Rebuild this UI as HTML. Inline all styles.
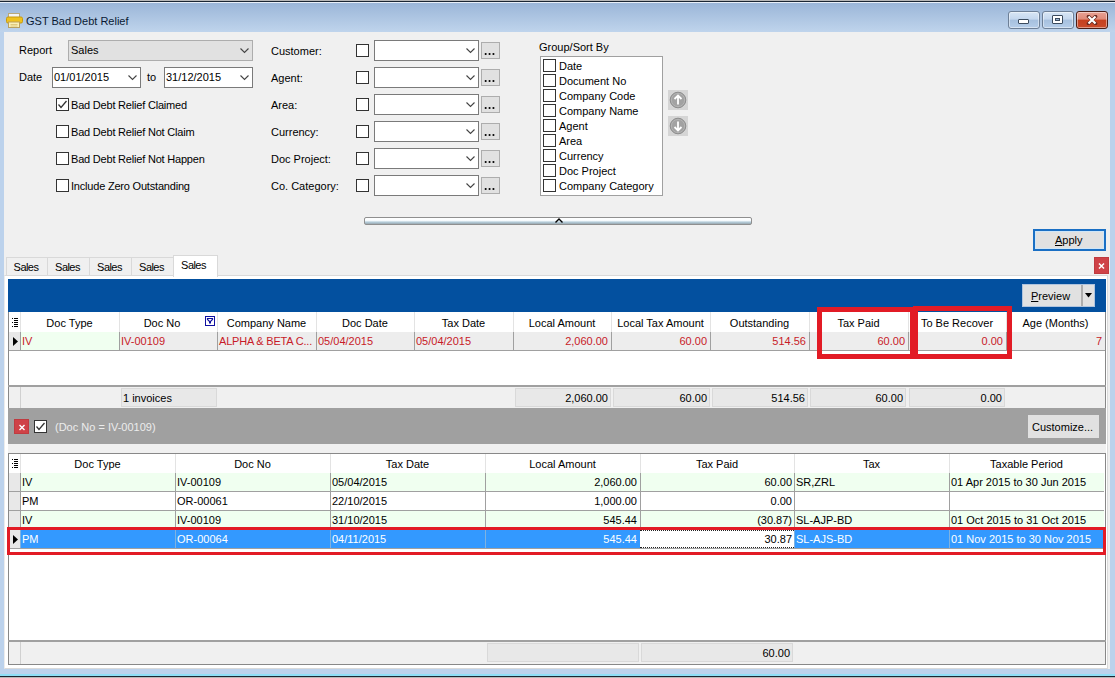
<!DOCTYPE html><html><head><meta charset="utf-8"><style>
*{margin:0;padding:0;box-sizing:border-box}
html,body{width:1115px;height:678px;overflow:hidden;background:#bcd2ec}
body{position:relative;font-family:"Liberation Sans",sans-serif;font-size:11px;color:#000}
div,svg{position:absolute}
.t{white-space:nowrap;line-height:13px;font-size:11px}
.cb{width:13px;height:13px;border:1px solid #333;background:#fff}
</style></head><body>

<div style="left:0px;top:0px;width:1115px;height:1px;background:#b8b8b8"></div>
<div style="left:0px;top:1px;width:1115px;height:1px;background:#1b2633"></div>
<div style="left:0px;top:2px;width:1115px;height:1px;background:#e8eff8"></div>
<div style="left:0px;top:3px;width:1115px;height:29px;background:linear-gradient(#9bb6d8,#bfd4ec)"></div>
<div style="left:0px;top:669px;width:1115px;height:5px;background:#bcd2ec"></div>
<div style="left:0px;top:674px;width:1115px;height:2px;background:#8fdff6"></div>
<div style="left:0px;top:676px;width:1115px;height:1px;background:#1b2633"></div>
<div style="left:0px;top:677px;width:1115px;height:1px;background:#b8b8b8"></div>
<div style="left:4px;top:32px;width:1106px;height:637px;background:#f0f0f0"></div>
<svg style="left:6px;top:12px" width="17" height="17" viewBox="0 0 17 17">
<rect x="2.5" y="1.5" width="11" height="4" fill="#f4f4f4" stroke="#b9a87a"/>
<rect x="0.5" y="5" width="16" height="6" rx="1.5" fill="#efc21d" stroke="#c79a10"/>
<rect x="2.5" y="10" width="11" height="5.5" fill="#fbf1b8" stroke="#b9a060"/>
<path d="M4.5 12.5h7M4.5 14h7" stroke="#d8c070" stroke-width="0.8"/>
</svg>
<div class="t" style="left:26px;top:15px;color:#0a1a33">GST Bad Debt Relief</div>
<div style="left:1008px;top:11px;width:32px;height:18px;border:1px solid #6d7f96;border-radius:3px;background:linear-gradient(#d8e6f5 0%,#c4d7ee 45%,#a6c0de 50%,#b5cde9 100%);box-shadow:inset 0 0 0 1px rgba(255,255,255,0.45)"></div>
<div style="left:1042px;top:11px;width:32px;height:18px;border:1px solid #6d7f96;border-radius:3px;background:linear-gradient(#d8e6f5 0%,#c4d7ee 45%,#a6c0de 50%,#b5cde9 100%);box-shadow:inset 0 0 0 1px rgba(255,255,255,0.45)"></div>
<div style="left:1076px;top:11px;width:32px;height:18px;border:1px solid #4a1d16;border-radius:3px;background:linear-gradient(#e9a294 0%,#df8a78 45%,#c5401f 50%,#c94a2a 100%);box-shadow:inset 0 0 0 1px rgba(255,255,255,0.45)"></div>
<div style="left:1018px;top:19px;width:11px;height:5px;background:#fff;border:1px solid #3b4b5e;border-radius:1px"></div>
<div style="left:1052px;top:15px;width:11px;height:9px;background:#fff;border:1px solid #3b4b5e;border-radius:1px"></div>
<div style="left:1055px;top:18px;width:5px;height:3px;background:#9bb3d0;border:1px solid #3b4b5e"></div>
<svg style="left:1086px;top:15px" width="12" height="10"><path d="M2.5 1.5 L9.5 8.5 M9.5 1.5 L2.5 8.5" stroke="#6a2a20" stroke-width="3.6" stroke-linecap="round"/><path d="M2.5 1.5 L9.5 8.5 M9.5 1.5 L2.5 8.5" stroke="#fff" stroke-width="2.2" stroke-linecap="butt"/></svg>
<div class="t" style="left:19px;top:44px;">Report</div>
<div style="left:68px;top:40px;width:185px;height:21px;background:#e1e1e1;border:1px solid #adadad"></div>
<div class="t" style="left:71px;top:44px;">Sales</div>
<svg style="position:absolute;left:240px;top:48px" width="9" height="6"><path d="M0.5 0.5 L4.5 4.5 L8.5 0.5" stroke="#444" stroke-width="1.1" fill="none"/></svg>
<div class="t" style="left:19px;top:71px;">Date</div>
<div style="left:52px;top:67px;width:89px;height:21px;background:#fff;border:1px solid #7a7a7a"></div>
<div class="t" style="left:54px;top:71px;">01/01/2015</div>
<svg style="position:absolute;left:128px;top:75px" width="9" height="6"><path d="M0.5 0.5 L4.5 4.5 L8.5 0.5" stroke="#444" stroke-width="1.1" fill="none"/></svg>
<div class="t" style="left:147px;top:71px;">to</div>
<div style="left:164px;top:67px;width:89px;height:21px;background:#fff;border:1px solid #7a7a7a"></div>
<div class="t" style="left:166px;top:71px;">31/12/2015</div>
<svg style="position:absolute;left:240px;top:75px" width="9" height="6"><path d="M0.5 0.5 L4.5 4.5 L8.5 0.5" stroke="#444" stroke-width="1.1" fill="none"/></svg>
<div class="cb" style="left:56px;top:98px"></div>
<svg style="position:absolute;left:56px;top:98px" width="13" height="13"><path d="M2.5 6.5 L5 9.5 L10.5 3" stroke="#333" stroke-width="1.3" fill="none"/></svg>
<div class="t" style="left:71px;top:99px;letter-spacing:-0.2px">Bad Debt Relief Claimed</div>
<div class="cb" style="left:56px;top:125px"></div>
<div class="t" style="left:71px;top:126px;letter-spacing:-0.2px">Bad Debt Relief Not Claim</div>
<div class="cb" style="left:56px;top:152px"></div>
<div class="t" style="left:71px;top:153px;letter-spacing:-0.2px">Bad Debt Relief Not Happen</div>
<div class="cb" style="left:56px;top:179px"></div>
<div class="t" style="left:71px;top:180px;letter-spacing:-0.2px">Include Zero Outstanding</div>
<div class="t" style="left:271px;top:45px;">Customer:</div>
<div class="cb" style="left:356px;top:44px"></div>
<div style="left:374px;top:40px;width:105px;height:21px;background:#fff;border:1px solid #7a7a7a"></div>
<svg style="position:absolute;left:466px;top:48px" width="9" height="6"><path d="M0.5 0.5 L4.5 4.5 L8.5 0.5" stroke="#444" stroke-width="1.1" fill="none"/></svg>
<div style="left:481px;top:42px;width:19px;height:17px;background:#e1e1e1;border:1px solid #adadad"></div>
<svg style="left:481px;top:42px" width="19" height="17"><rect x="3.8" y="11" width="1.7" height="2" fill="#111"/><rect x="7.7" y="11" width="1.7" height="2" fill="#111"/><rect x="11.6" y="11" width="1.7" height="2" fill="#111"/></svg>
<div class="t" style="left:271px;top:72px;">Agent:</div>
<div class="cb" style="left:356px;top:71px"></div>
<div style="left:374px;top:67px;width:105px;height:21px;background:#fff;border:1px solid #7a7a7a"></div>
<svg style="position:absolute;left:466px;top:75px" width="9" height="6"><path d="M0.5 0.5 L4.5 4.5 L8.5 0.5" stroke="#444" stroke-width="1.1" fill="none"/></svg>
<div style="left:481px;top:69px;width:19px;height:17px;background:#e1e1e1;border:1px solid #adadad"></div>
<svg style="left:481px;top:69px" width="19" height="17"><rect x="3.8" y="11" width="1.7" height="2" fill="#111"/><rect x="7.7" y="11" width="1.7" height="2" fill="#111"/><rect x="11.6" y="11" width="1.7" height="2" fill="#111"/></svg>
<div class="t" style="left:271px;top:99px;">Area:</div>
<div class="cb" style="left:356px;top:98px"></div>
<div style="left:374px;top:94px;width:105px;height:21px;background:#fff;border:1px solid #7a7a7a"></div>
<svg style="position:absolute;left:466px;top:102px" width="9" height="6"><path d="M0.5 0.5 L4.5 4.5 L8.5 0.5" stroke="#444" stroke-width="1.1" fill="none"/></svg>
<div style="left:481px;top:96px;width:19px;height:17px;background:#e1e1e1;border:1px solid #adadad"></div>
<svg style="left:481px;top:96px" width="19" height="17"><rect x="3.8" y="11" width="1.7" height="2" fill="#111"/><rect x="7.7" y="11" width="1.7" height="2" fill="#111"/><rect x="11.6" y="11" width="1.7" height="2" fill="#111"/></svg>
<div class="t" style="left:271px;top:126px;">Currency:</div>
<div class="cb" style="left:356px;top:125px"></div>
<div style="left:374px;top:121px;width:105px;height:21px;background:#fff;border:1px solid #7a7a7a"></div>
<svg style="position:absolute;left:466px;top:129px" width="9" height="6"><path d="M0.5 0.5 L4.5 4.5 L8.5 0.5" stroke="#444" stroke-width="1.1" fill="none"/></svg>
<div style="left:481px;top:123px;width:19px;height:17px;background:#e1e1e1;border:1px solid #adadad"></div>
<svg style="left:481px;top:123px" width="19" height="17"><rect x="3.8" y="11" width="1.7" height="2" fill="#111"/><rect x="7.7" y="11" width="1.7" height="2" fill="#111"/><rect x="11.6" y="11" width="1.7" height="2" fill="#111"/></svg>
<div class="t" style="left:271px;top:153px;">Doc Project:</div>
<div class="cb" style="left:356px;top:152px"></div>
<div style="left:374px;top:148px;width:105px;height:21px;background:#fff;border:1px solid #7a7a7a"></div>
<svg style="position:absolute;left:466px;top:156px" width="9" height="6"><path d="M0.5 0.5 L4.5 4.5 L8.5 0.5" stroke="#444" stroke-width="1.1" fill="none"/></svg>
<div style="left:481px;top:150px;width:19px;height:17px;background:#e1e1e1;border:1px solid #adadad"></div>
<svg style="left:481px;top:150px" width="19" height="17"><rect x="3.8" y="11" width="1.7" height="2" fill="#111"/><rect x="7.7" y="11" width="1.7" height="2" fill="#111"/><rect x="11.6" y="11" width="1.7" height="2" fill="#111"/></svg>
<div class="t" style="left:271px;top:180px;">Co. Category:</div>
<div class="cb" style="left:356px;top:179px"></div>
<div style="left:374px;top:175px;width:105px;height:21px;background:#fff;border:1px solid #7a7a7a"></div>
<svg style="position:absolute;left:466px;top:183px" width="9" height="6"><path d="M0.5 0.5 L4.5 4.5 L8.5 0.5" stroke="#444" stroke-width="1.1" fill="none"/></svg>
<div style="left:481px;top:177px;width:19px;height:17px;background:#e1e1e1;border:1px solid #adadad"></div>
<svg style="left:481px;top:177px" width="19" height="17"><rect x="3.8" y="11" width="1.7" height="2" fill="#111"/><rect x="7.7" y="11" width="1.7" height="2" fill="#111"/><rect x="11.6" y="11" width="1.7" height="2" fill="#111"/></svg>
<div class="t" style="left:539px;top:41px;">Group/Sort By</div>
<div style="left:540px;top:56px;width:123px;height:140px;background:#fff;border:1px solid #a0a0a0"></div>
<div class="cb" style="left:543px;top:59px"></div>
<div class="t" style="left:559px;top:60px;">Date</div>
<div class="cb" style="left:543px;top:74px"></div>
<div class="t" style="left:559px;top:75px;">Document No</div>
<div class="cb" style="left:543px;top:89px"></div>
<div class="t" style="left:559px;top:90px;">Company Code</div>
<div class="cb" style="left:543px;top:104px"></div>
<div class="t" style="left:559px;top:105px;">Company Name</div>
<div class="cb" style="left:543px;top:119px"></div>
<div class="t" style="left:559px;top:120px;">Agent</div>
<div class="cb" style="left:543px;top:134px"></div>
<div class="t" style="left:559px;top:135px;">Area</div>
<div class="cb" style="left:543px;top:149px"></div>
<div class="t" style="left:559px;top:150px;">Currency</div>
<div class="cb" style="left:543px;top:164px"></div>
<div class="t" style="left:559px;top:165px;">Doc Project</div>
<div class="cb" style="left:543px;top:179px"></div>
<div class="t" style="left:559px;top:180px;">Company Category</div>
<div style="left:668px;top:90px;width:20px;height:20px;background:#d5d5d5"></div>
<svg style="left:668px;top:90px" width="20" height="20"><circle cx="10" cy="10" r="7.8" fill="#a2a2a2" stroke="#8e8e8e" stroke-width="1"/><circle cx="10" cy="10" r="6.6" fill="none" stroke="#b4b4b4" stroke-width="1"/><path d="M10 5.5 L10 14.5 M6.5 9 L10 5.5 L13.5 9" stroke="#fff" stroke-width="1.8" fill="none"/></svg>
<div style="left:668px;top:116px;width:20px;height:20px;background:#d5d5d5"></div>
<svg style="left:668px;top:116px" width="20" height="20"><circle cx="10" cy="10" r="7.8" fill="#a2a2a2" stroke="#8e8e8e" stroke-width="1"/><circle cx="10" cy="10" r="6.6" fill="none" stroke="#b4b4b4" stroke-width="1"/><path d="M10 5.5 L10 14.5 M6.5 11 L10 14.5 L13.5 11" stroke="#fff" stroke-width="1.8" fill="none"/></svg>
<div style="left:364px;top:217px;width:388px;height:8px;border:1px solid #8f8f8f;border-radius:2px;background:linear-gradient(#ffffff 0%,#fafdff 40%,#b4ccd9 70%,#9aa8b0 100%)"></div>
<svg style="left:555px;top:218px" width="8" height="5"><path d="M0.5 4.5 L4 1 L7.5 4.5" stroke="#000" stroke-width="1.4" fill="none"/></svg>
<div style="left:1033px;top:229px;width:73px;height:22px;border:2px solid #1a6fc4;background:#e1e1e1;box-shadow:inset 0 0 0 1px #cfe6f8"></div>
<div class="t" style="left:1055px;top:234px;"><u>A</u>pply</div>
<div style="left:1094px;top:257px;width:15px;height:17px;background:#cf4247;border:1px solid #bf3b40"></div>
<svg style="left:1097px;top:261px" width="9" height="9"><path d="M2 2.5 L7 7.5 M7 2.5 L2 7.5" stroke="#fff" stroke-width="1.5"/></svg>
<div style="left:4px;top:275px;width:1104px;height:394px;background:#fff;border:1px solid #dadada;border-left-color:#ececec"></div>
<div style="left:6px;top:257px;width:42px;height:18px;background:#f0f0f0;border:1px solid #d9d9d9;border-bottom:none"></div>
<div class="t" style="left:5px;width:42px;text-align:center;top:261px;letter-spacing:-0.55px">Sales</div>
<div style="left:47px;top:257px;width:43px;height:18px;background:#f0f0f0;border:1px solid #d9d9d9;border-bottom:none"></div>
<div class="t" style="left:46px;width:43px;text-align:center;top:261px;letter-spacing:-0.55px">Sales</div>
<div style="left:89px;top:257px;width:43px;height:18px;background:#f0f0f0;border:1px solid #d9d9d9;border-bottom:none"></div>
<div class="t" style="left:88px;width:43px;text-align:center;top:261px;letter-spacing:-0.55px">Sales</div>
<div style="left:131px;top:257px;width:43px;height:18px;background:#f0f0f0;border:1px solid #d9d9d9;border-bottom:none"></div>
<div class="t" style="left:130px;width:43px;text-align:center;top:261px;letter-spacing:-0.55px">Sales</div>
<div style="left:173px;top:255px;width:45px;height:22px;background:#fff;border:1px solid #d9d9d9;border-bottom:none"></div>
<div class="t" style="left:171px;width:45px;text-align:center;top:259px;letter-spacing:-0.55px">Sales</div>
<div style="left:8px;top:279px;width:1098px;height:33px;background:#03509f"></div>
<div style="left:1022px;top:284px;width:73px;height:23px;background:#e1e1e1;border:1px solid #b0c4de"></div>
<div style="left:1081px;top:285px;width:2px;height:21px;background:#adadad"></div>
<div class="t" style="left:1031px;top:290px;"><u>P</u>review</div>
<svg style="left:1085px;top:293px" width="8" height="5"><path d="M0 0 L7 0 L3.5 4.5 Z" fill="#000"/></svg>
<div style="left:8px;top:312px;width:1098px;height:96px;background:#fff;border-left:1px solid #888;border-right:1px solid #888"></div>
<div style="left:20px;top:312px;width:1px;height:20px;background:#e3e3e3"></div>
<div style="left:119px;top:312px;width:1px;height:20px;background:#e3e3e3"></div>
<div style="left:217px;top:312px;width:1px;height:20px;background:#e3e3e3"></div>
<div style="left:316px;top:312px;width:1px;height:20px;background:#e3e3e3"></div>
<div style="left:414px;top:312px;width:1px;height:20px;background:#e3e3e3"></div>
<div style="left:513px;top:312px;width:1px;height:20px;background:#e3e3e3"></div>
<div style="left:611px;top:312px;width:1px;height:20px;background:#e3e3e3"></div>
<div style="left:710px;top:312px;width:1px;height:20px;background:#e3e3e3"></div>
<div style="left:809px;top:312px;width:1px;height:20px;background:#e3e3e3"></div>
<div style="left:908px;top:312px;width:1px;height:20px;background:#e3e3e3"></div>
<div style="left:1006px;top:312px;width:1px;height:20px;background:#e3e3e3"></div>
<div class="t" style="left:20px;width:99px;text-align:center;top:317px;">Doc Type</div>
<div class="t" style="left:119px;width:86px;text-align:center;top:317px;">Doc No</div>
<div class="t" style="left:217px;width:99px;text-align:center;top:317px;">Company Name</div>
<div class="t" style="left:316px;width:98px;text-align:center;top:317px;">Doc Date</div>
<div class="t" style="left:414px;width:99px;text-align:center;top:317px;">Tax Date</div>
<div class="t" style="left:513px;width:98px;text-align:center;top:317px;">Local Amount</div>
<div class="t" style="left:611px;width:99px;text-align:center;top:317px;">Local Tax Amount</div>
<div class="t" style="left:710px;width:99px;text-align:center;top:317px;">Outstanding</div>
<div class="t" style="left:809px;width:99px;text-align:center;top:317px;">Tax Paid</div>
<div class="t" style="left:908px;width:98px;text-align:center;top:317px;">To Be Recover</div>
<div class="t" style="left:1006px;width:99px;text-align:center;top:317px;">Age (Months)</div>
<svg style="left:12px;top:318px" width="8" height="10"><rect x="0" y="0" width="1" height="1" fill="#000"/><rect x="2" y="0" width="4" height="1" fill="#000"/><rect x="2" y="2" width="4" height="1" fill="#000"/><rect x="0" y="4" width="1" height="1" fill="#000"/><rect x="2" y="4" width="4" height="1" fill="#000"/><rect x="2" y="6" width="4" height="1" fill="#000"/><rect x="0" y="8" width="1" height="1" fill="#000"/><rect x="2" y="8" width="4" height="1" fill="#000"/></svg>
<div style="left:205px;top:316px;width:10px;height:10px;border:1px solid #1010a0;background:#fff"></div>
<svg style="left:205px;top:316px" width="10" height="10"><path d="M2.5 2.5 L7.5 2.5 L7.5 3.5 L5.5 5.5 L4.5 5.5 L2.5 3.5 Z" fill="none" stroke="#1010a0" stroke-width="1.2"/><rect x="4" y="5" width="2" height="2.5" fill="#1010a0"/></svg>
<div style="left:9px;top:332px;width:11px;height:18px;background:#e8e8e8"></div>
<div style="left:20px;top:332px;width:99px;height:18px;background:#f0fff0"></div>
<div style="left:119px;top:332px;width:986px;height:18px;background:#ededed"></div>
<div style="left:20px;top:332px;width:1px;height:18px;background:#a0a0a0"></div>
<div style="left:119px;top:332px;width:1px;height:18px;background:#a0a0a0"></div>
<div style="left:217px;top:332px;width:1px;height:18px;background:#a0a0a0"></div>
<div style="left:316px;top:332px;width:1px;height:18px;background:#a0a0a0"></div>
<div style="left:414px;top:332px;width:1px;height:18px;background:#a0a0a0"></div>
<div style="left:513px;top:332px;width:1px;height:18px;background:#a0a0a0"></div>
<div style="left:611px;top:332px;width:1px;height:18px;background:#a0a0a0"></div>
<div style="left:710px;top:332px;width:1px;height:18px;background:#a0a0a0"></div>
<div style="left:809px;top:332px;width:1px;height:18px;background:#a0a0a0"></div>
<div style="left:908px;top:332px;width:1px;height:18px;background:#a0a0a0"></div>
<div style="left:1006px;top:332px;width:1px;height:18px;background:#a0a0a0"></div>
<div style="left:9px;top:350px;width:1096px;height:1px;background:#a0a0a0"></div>
<svg style="left:13px;top:337px" width="6" height="10"><path d="M0 0 L5 4.5 L0 9 Z" fill="#000"/></svg>
<div class="t" style="left:22px;top:335px;color:#c81a28">IV</div>
<div class="t" style="left:121px;top:335px;color:#c81a28">IV-00109</div>
<div class="t" style="left:219px;top:335px;color:#c81a28;letter-spacing:-0.2px">ALPHA &amp; BETA C...</div>
<div class="t" style="left:318px;top:335px;color:#c81a28">05/04/2015</div>
<div class="t" style="left:416px;top:335px;color:#c81a28">05/04/2015</div>
<div class="t" style="right:507px;top:335px;color:#c81a28">2,060.00</div>
<div class="t" style="right:408px;top:335px;color:#c81a28">60.00</div>
<div class="t" style="right:309px;top:335px;color:#c81a28">514.56</div>
<div class="t" style="right:210px;top:335px;color:#c81a28">60.00</div>
<div class="t" style="right:112px;top:335px;color:#c81a28">0.00</div>
<div class="t" style="right:13px;top:335px;color:#c81a28">7</div>
<div style="left:8px;top:385px;width:1098px;height:2px;background:#a0a0a0"></div>
<div style="left:9px;top:387px;width:1096px;height:21px;background:#f0f0f0"></div>
<div style="left:20px;top:387px;width:1px;height:21px;background:#d0d0d0"></div>
<div style="left:121px;top:388px;width:96px;height:19px;background:#e8e8e8;border:1px solid #d9d9d9"></div>
<div class="t" style="left:123px;top:392px;">1 invoices</div>
<div style="left:515px;top:388px;width:96px;height:19px;background:#e8e8e8;border:1px solid #d9d9d9"></div>
<div class="t" style="right:507px;top:392px;">2,060.00</div>
<div style="left:613px;top:388px;width:97px;height:19px;background:#e8e8e8;border:1px solid #d9d9d9"></div>
<div class="t" style="right:408px;top:392px;">60.00</div>
<div style="left:712px;top:388px;width:96px;height:19px;background:#e8e8e8;border:1px solid #d9d9d9"></div>
<div class="t" style="right:310px;top:392px;">514.56</div>
<div style="left:810px;top:388px;width:96px;height:19px;background:#e8e8e8;border:1px solid #d9d9d9"></div>
<div class="t" style="right:212px;top:392px;">60.00</div>
<div style="left:909px;top:388px;width:96px;height:19px;background:#e8e8e8;border:1px solid #d9d9d9"></div>
<div class="t" style="right:113px;top:392px;">0.00</div>
<div style="left:8px;top:408px;width:1098px;height:36px;background:#a0a0a0"></div>
<div style="left:14px;top:419px;width:15px;height:15px;background:#cf4247;border:1px solid #bf3b40"></div>
<svg style="left:18px;top:423px" width="8" height="8"><path d="M1.5 2 L6.5 7 M6.5 2 L1.5 7" stroke="#fff" stroke-width="1.4"/></svg>
<div class="cb" style="left:34px;top:420px"></div>
<svg style="position:absolute;left:34px;top:420px" width="13" height="13"><path d="M2.5 6.5 L5 9.5 L10.5 3" stroke="#333" stroke-width="1.3" fill="none"/></svg>
<div class="t" style="left:55px;top:421px;color:#ececec">(Doc No = IV-00109)</div>
<div style="left:1028px;top:415px;width:71px;height:23px;background:#e1e1e1"></div>
<div class="t" style="left:1032px;top:421px;">Customize...</div>
<div style="left:8px;top:444px;width:1098px;height:9px;background:#f0f0f0"></div>
<div style="left:8px;top:453px;width:1098px;height:212px;background:#fff;border:1px solid #888"></div>
<div style="left:20px;top:454px;width:1px;height:19px;background:#e3e3e3"></div>
<div style="left:175px;top:454px;width:1px;height:19px;background:#e3e3e3"></div>
<div style="left:330px;top:454px;width:1px;height:19px;background:#e3e3e3"></div>
<div style="left:485px;top:454px;width:1px;height:19px;background:#e3e3e3"></div>
<div style="left:640px;top:454px;width:1px;height:19px;background:#e3e3e3"></div>
<div style="left:794px;top:454px;width:1px;height:19px;background:#e3e3e3"></div>
<div style="left:949px;top:454px;width:1px;height:19px;background:#e3e3e3"></div>
<div class="t" style="left:20px;width:155px;text-align:center;top:458px;">Doc Type</div>
<div class="t" style="left:175px;width:155px;text-align:center;top:458px;">Doc No</div>
<div class="t" style="left:330px;width:155px;text-align:center;top:458px;">Tax Date</div>
<div class="t" style="left:485px;width:155px;text-align:center;top:458px;">Local Amount</div>
<div class="t" style="left:640px;width:154px;text-align:center;top:458px;">Tax Paid</div>
<div class="t" style="left:794px;width:155px;text-align:center;top:458px;">Tax</div>
<div class="t" style="left:949px;width:155px;text-align:center;top:458px;">Taxable Period</div>
<svg style="left:12px;top:459px" width="8" height="10"><rect x="0" y="0" width="1" height="1" fill="#000"/><rect x="2" y="0" width="4" height="1" fill="#000"/><rect x="2" y="2" width="4" height="1" fill="#000"/><rect x="0" y="4" width="1" height="1" fill="#000"/><rect x="2" y="4" width="4" height="1" fill="#000"/><rect x="2" y="6" width="4" height="1" fill="#000"/><rect x="0" y="8" width="1" height="1" fill="#000"/><rect x="2" y="8" width="4" height="1" fill="#000"/></svg>
<div style="left:9px;top:473px;width:11px;height:18px;background:#e8e8e8"></div>
<div style="left:21px;top:473px;width:1083px;height:18px;background:#f0fff0"></div>
<div style="left:20px;top:473px;width:1px;height:18px;background:#a0a0a0"></div>
<div style="left:175px;top:473px;width:1px;height:18px;background:#a0a0a0"></div>
<div style="left:330px;top:473px;width:1px;height:18px;background:#a0a0a0"></div>
<div style="left:485px;top:473px;width:1px;height:18px;background:#a0a0a0"></div>
<div style="left:640px;top:473px;width:1px;height:18px;background:#a0a0a0"></div>
<div style="left:794px;top:473px;width:1px;height:18px;background:#a0a0a0"></div>
<div style="left:949px;top:473px;width:1px;height:18px;background:#a0a0a0"></div>
<div style="left:9px;top:491px;width:1095px;height:1px;background:#a0a0a0"></div>
<div class="t" style="left:22px;top:476px;color:#000">IV</div>
<div class="t" style="left:177px;top:476px;color:#000">IV-00109</div>
<div class="t" style="left:332px;top:476px;color:#000">05/04/2015</div>
<div class="t" style="right:478px;top:476px;color:#000">2,060.00</div>
<div class="t" style="right:323px;top:476px;color:#000">60.00</div>
<div class="t" style="left:796px;top:476px;color:#000">SR,ZRL</div>
<div class="t" style="left:951px;top:476px;color:#000">01 Apr 2015 to 30 Jun 2015</div>
<div style="left:9px;top:492px;width:11px;height:18px;background:#e8e8e8"></div>
<div style="left:21px;top:492px;width:1083px;height:18px;background:#fff"></div>
<div style="left:20px;top:492px;width:1px;height:18px;background:#a0a0a0"></div>
<div style="left:175px;top:492px;width:1px;height:18px;background:#a0a0a0"></div>
<div style="left:330px;top:492px;width:1px;height:18px;background:#a0a0a0"></div>
<div style="left:485px;top:492px;width:1px;height:18px;background:#a0a0a0"></div>
<div style="left:640px;top:492px;width:1px;height:18px;background:#a0a0a0"></div>
<div style="left:794px;top:492px;width:1px;height:18px;background:#a0a0a0"></div>
<div style="left:949px;top:492px;width:1px;height:18px;background:#a0a0a0"></div>
<div style="left:9px;top:510px;width:1095px;height:1px;background:#a0a0a0"></div>
<div class="t" style="left:22px;top:495px;color:#000">PM</div>
<div class="t" style="left:177px;top:495px;color:#000">OR-00061</div>
<div class="t" style="left:332px;top:495px;color:#000">22/10/2015</div>
<div class="t" style="right:478px;top:495px;color:#000">1,000.00</div>
<div class="t" style="right:323px;top:495px;color:#000">0.00</div>
<div class="t" style="left:796px;top:495px;color:#000"></div>
<div class="t" style="left:951px;top:495px;color:#000"></div>
<div style="left:9px;top:511px;width:11px;height:18px;background:#e8e8e8"></div>
<div style="left:21px;top:511px;width:1083px;height:18px;background:#f0fff0"></div>
<div style="left:20px;top:511px;width:1px;height:18px;background:#a0a0a0"></div>
<div style="left:175px;top:511px;width:1px;height:18px;background:#a0a0a0"></div>
<div style="left:330px;top:511px;width:1px;height:18px;background:#a0a0a0"></div>
<div style="left:485px;top:511px;width:1px;height:18px;background:#a0a0a0"></div>
<div style="left:640px;top:511px;width:1px;height:18px;background:#a0a0a0"></div>
<div style="left:794px;top:511px;width:1px;height:18px;background:#a0a0a0"></div>
<div style="left:949px;top:511px;width:1px;height:18px;background:#a0a0a0"></div>
<div style="left:9px;top:529px;width:1095px;height:1px;background:#a0a0a0"></div>
<div class="t" style="left:22px;top:514px;color:#000">IV</div>
<div class="t" style="left:177px;top:514px;color:#000">IV-00109</div>
<div class="t" style="left:332px;top:514px;color:#000">31/10/2015</div>
<div class="t" style="right:478px;top:514px;color:#000">545.44</div>
<div class="t" style="right:323px;top:514px;color:#000">(30.87)</div>
<div class="t" style="left:796px;top:514px;color:#000">SL-AJP-BD</div>
<div class="t" style="left:951px;top:514px;color:#000">01 Oct 2015 to 31 Oct 2015</div>
<div style="left:9px;top:530px;width:11px;height:18px;background:#e8e8e8"></div>
<div style="left:21px;top:530px;width:1083px;height:18px;background:#3399ff"></div>
<div style="left:640px;top:530px;width:154px;height:18px;background:#fff;border-top:1px dotted #222;border-bottom:1px dotted #222"></div>
<div style="left:20px;top:530px;width:1px;height:18px;background:#7fb2e0"></div>
<div style="left:175px;top:530px;width:1px;height:18px;background:#7fb2e0"></div>
<div style="left:330px;top:530px;width:1px;height:18px;background:#7fb2e0"></div>
<div style="left:485px;top:530px;width:1px;height:18px;background:#7fb2e0"></div>
<div style="left:794px;top:530px;width:1px;height:18px;background:#7fb2e0"></div>
<div style="left:949px;top:530px;width:1px;height:18px;background:#7fb2e0"></div>
<div style="left:9px;top:548px;width:1095px;height:1px;background:#a0a0a0"></div>
<div class="t" style="left:22px;top:533px;color:#fff">PM</div>
<div class="t" style="left:177px;top:533px;color:#fff">OR-00064</div>
<div class="t" style="left:332px;top:533px;color:#fff">04/11/2015</div>
<div class="t" style="right:478px;top:533px;color:#fff">545.44</div>
<div class="t" style="right:323px;top:533px;color:#000">30.87</div>
<div class="t" style="left:796px;top:533px;color:#fff">SL-AJS-BD</div>
<div class="t" style="left:951px;top:533px;color:#fff">01 Nov 2015 to 30 Nov 2015</div>
<svg style="left:13px;top:535px" width="6" height="10"><path d="M0 0 L5 4.5 L0 9 Z" fill="#000"/></svg>
<div style="left:8px;top:640px;width:1098px;height:2px;background:#a0a0a0"></div>
<div style="left:9px;top:642px;width:1096px;height:22px;background:#f0f0f0"></div>
<div style="left:20px;top:642px;width:1px;height:22px;background:#d0d0d0"></div>
<div style="left:487px;top:643px;width:152px;height:19px;background:#e8e8e8;border:1px solid #d9d9d9"></div>
<div style="left:641px;top:643px;width:152px;height:19px;background:#e8e8e8;border:1px solid #d9d9d9"></div>
<div class="t" style="right:325px;top:647px;">60.00</div>
<div style="left:817px;top:307px;width:98px;height:52px;border:5px solid #e21b25"></div>
<div style="left:913px;top:306px;width:99px;height:53px;border:5px solid #e21b25"></div>
<div style="left:7px;top:527px;width:1099px;height:28px;border:3px solid #e21b25"></div>
</body></html>
